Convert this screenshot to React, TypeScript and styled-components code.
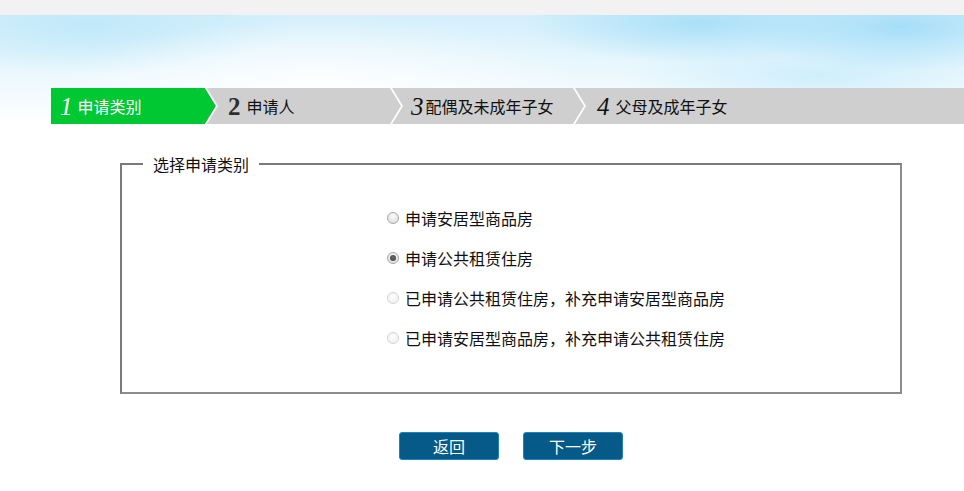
import * as React from 'react';
import styled, { createGlobalStyle, css } from 'styled-components';

const GlobalStyle = createGlobalStyle`
  html, body {
    margin: 0;
    padding: 0;
    background: #fff;
    font-family: "Noto Sans CJK SC", "Noto Sans", sans-serif;
    color: #111;
  }
`;

const TopBar = styled.div`
  height: 15px;
  background: #f2f2f3;
`;

const Sky = styled.div`
  height: 110px;
  padding: 73px 0 0 51px;
  box-sizing: border-box;
  background:
    radial-gradient(ellipse 280px 75px at 320px 80px, rgba(255,255,255,1) 0%, rgba(255,255,255,0) 100%),
    radial-gradient(ellipse 200px 50px at 90px 10px, rgba(190,232,250,0.9) 0%, rgba(190,232,250,0) 100%),
    radial-gradient(ellipse 180px 40px at 700px 8px, rgba(165,222,248,0.9) 0%, rgba(165,222,248,0) 100%),
    radial-gradient(ellipse 160px 45px at 900px 12px, rgba(160,220,248,0.9) 0%, rgba(160,220,248,0) 100%),
    radial-gradient(ellipse 200px 40px at 820px 60px, rgba(200,236,252,0.8) 0%, rgba(200,236,252,0) 100%),
    linear-gradient(to bottom, #d4effb 0%, #e8f7fd 45%, #f6fcff 80%, #ffffff 100%);
`;

const Steps = styled.div`
  display: flex;
  height: 36px;
  background: #cfcfcf;
`;

const Step = styled.div<{ $active?: boolean; $last?: boolean; $width?: number; $pad: number }>`
  position: relative;
  display: flex;
  align-items: center;
  box-sizing: border-box;
  padding-left: ${p => p.$pad}px;
  ${p => (p.$width ? css`width: ${p.$width}px;` : css`flex: 1;`)}
  background: ${p => (p.$active ? '#00c833' : '#cfcfcf')};
  color: ${p => (p.$active ? '#fff' : '#111')};

  ${p =>
    !p.$last &&
    css`
      &::before {
        content: '';
        position: absolute;
        top: 0;
        right: -11px;
        width: 11px;
        height: 100%;
        background: ${p.$active ? '#00c833' : '#cfcfcf'};
        clip-path: polygon(0 0, 100% 50%, 0 100%);
        z-index: 1;
      }
      &::after {
        content: '';
        position: absolute;
        top: 0;
        right: -13px;
        width: 13px;
        height: 100%;
        background: #fff;
        clip-path: polygon(0 0, 2px 0, 100% 50%, 2px 100%, 0 100%, 11px 50%);
        z-index: 2;
      }
    `}
`;

const StepNum = styled.span<{ $italic?: boolean; $gap?: number }>`
  font-family: "Liberation Serif", "DejaVu Serif", serif;
  font-size: 25px;
  font-style: ${p => (p.$italic ? 'italic' : 'normal')};
  font-weight: ${p => (p.$italic ? 400 : 700)};
  color: inherit;
  opacity: ${p => (p.$italic ? 1 : 0.85)};
  margin-right: ${p => p.$gap ?? 6}px;
  line-height: 1;
`;

const StepLabel = styled.span`
  font-size: 16px;
  line-height: 1;
`;

const Main = styled.div`
  padding-top: 31px;
`;

const Box = styled.fieldset`
  margin: 0 0 0 120px;
  width: 782px;
  height: 238px;
  box-sizing: border-box;
  padding: 0 0 0 21px;
  border: 2px solid #8c8c8c;
  border-top-color: #7a7a7a;
  border-left-color: #7a7a7a;
`;

const Legend = styled.legend`
  padding: 0 10px;
  font-size: 16px;
  line-height: 16px;
  color: #111;
`;

const Options = styled.div`
  display: flex;
  flex-direction: column;
  margin: 26px 0 0 244px;
`;

const Option = styled.label<{ $disabled?: boolean }>`
  display: flex;
  align-items: center;
  height: 40px;
  font-size: 16px;
  color: #111;
  cursor: ${p => (p.$disabled ? 'default' : 'pointer')};
`;

const Radio = styled.input.attrs({ type: 'radio' })`
  appearance: none;
  margin: 0 6px 0 0;
  width: 12px;
  height: 12px;
  border-radius: 50%;
  box-sizing: border-box;
  border: 1px solid #a8a8a8;
  background: radial-gradient(circle at 50% 35%, #fcfcfc 0%, #e2e2e2 70%, #d6d6d6 100%);
  position: relative;

  &:checked::after {
    content: '';
    position: absolute;
    left: 2px;
    top: 2px;
    width: 6px;
    height: 6px;
    border-radius: 50%;
    background: radial-gradient(circle at 50% 40%, #6a6a6a 0%, #3c3c3c 100%);
  }

  &:disabled {
    border-color: #d4d4d4;
    background: radial-gradient(circle at 50% 35%, #fdfdfd 0%, #eeeeee 100%);
  }
`;

const Actions = styled.div`
  display: flex;
  justify-content: center;
  gap: 24px;
  width: 782px;
  margin: 38px 0 0 120px;
`;

const Button = styled.button`
  width: 100px;
  height: 28px;
  box-sizing: border-box;
  border: 1px solid #1a86bf;
  border-radius: 3px;
  background: #065a88;
  color: #fff;
  font-family: inherit;
  font-size: 16px;
  line-height: 1;
  padding: 0;
  cursor: pointer;
`;

const options = [
  { label: '申请安居型商品房', checked: false, disabled: false },
  { label: '申请公共租赁住房', checked: true, disabled: false },
  { label: '已申请公共租赁住房，补充申请安居型商品房', checked: false, disabled: true },
  { label: '已申请安居型商品房，补充申请公共租赁住房', checked: false, disabled: true },
];

export default function App() {
  return (
    <>
      <GlobalStyle />
      <TopBar />
      <Sky>
        <Steps>
          <Step $active $width={154} $pad={9}>
            <StepNum $italic $gap={5}>1</StepNum>
            <StepLabel>申请类别</StepLabel>
          </Step>
          <Step $width={185} $pad={23}>
            <StepNum>2</StepNum>
            <StepLabel>申请人</StepLabel>
          </Step>
          <Step $width={183} $pad={21}>
            <StepNum $italic $gap={2}>3</StepNum>
            <StepLabel>配偶及未成年子女</StepLabel>
          </Step>
          <Step $last $pad={24}>
            <StepNum $italic>4</StepNum>
            <StepLabel>父母及成年子女</StepLabel>
          </Step>
        </Steps>
      </Sky>
      <Main>
        <Box>
          <Legend>选择申请类别</Legend>
          <Options>
            {options.map((o, i) => (
              <Option key={i} $disabled={o.disabled}>
                <Radio name="type" defaultChecked={o.checked} disabled={o.disabled} />
                {o.label}
              </Option>
            ))}
          </Options>
        </Box>
        <Actions>
          <Button>返回</Button>
          <Button>下一步</Button>
        </Actions>
      </Main>
    </>
  );
}
